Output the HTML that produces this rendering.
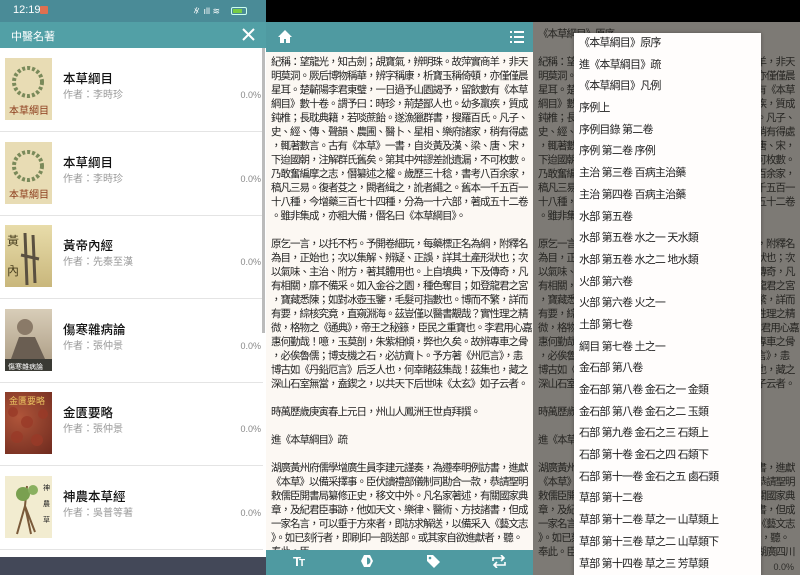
<!DOCTYPE html>
<html><head><meta charset="utf-8">
<style>
*{margin:0;padding:0;box-sizing:border-box}
body{width:800px;height:575px;overflow:hidden;background:#000;position:relative;font-family:"Liberation Sans","Noto Sans CJK TC",sans-serif}
.p{position:absolute;top:0;height:575px;overflow:hidden}
#L{left:0;width:267px;background:#fff}
#M{left:266px;width:267px;background:#fcf8f3}
#R{left:533px;width:267px;background:#fcf8f3}
.sb{position:absolute;left:0;top:0;width:267px;height:22px;background:#4a8b97;color:#fff;font-size:11px}
.hd{position:absolute;left:0;top:22px;width:267px;height:26px;background:#52a0a6;color:#fff;font-size:11px}
.item{position:absolute;left:0;width:263px;height:84px;border-bottom:1px solid #e4e4e4}
.cov{position:absolute;left:5px;top:10px;width:47px;height:62px;overflow:hidden}
.t{position:absolute;left:63px;top:20px;font-size:12.5px;color:#111;font-weight:500}
.a{position:absolute;left:63px;top:38px;font-size:10px;color:#999}
.pc{position:absolute;right:2px;top:42px;font-size:9px;color:#888}
.txt{position:absolute;left:5px;top:55px;font-size:10.5px;letter-spacing:-1px;line-height:14px;color:#222;white-space:pre}
.bar{position:absolute;left:0;width:267px;background:#4f9aa1}
.menu{position:absolute;left:41px;top:33px;width:187px;height:545px;background:#fffdfc;box-shadow:0 0 4px rgba(0,0,0,.3)}
.menu div{height:21.7px;line-height:21.7px;font-size:11px;letter-spacing:-0.8px;color:#222;padding-left:5px;white-space:nowrap}
</style></head><body>
<div class="p" id="L">
 <div class="sb"><span style="position:absolute;left:13px;top:4px">12:19</span><span style="position:absolute;left:40px;top:6px;width:8px;height:8px;background:#e07050;border-radius:1px"></span>
 <span style="position:absolute;left:192px;top:4px;font-size:9px">∦ ıll ≋</span><span style="position:absolute;left:231px;top:7px;width:16px;height:8px;border:1px solid #cfe;border-radius:2px"><span style="display:block;width:9px;height:4px;margin:1px;background:#7c4"></span></span></div>
 <div class="hd"><span style="position:absolute;left:11px;top:6px">中醫名著</span>
 <svg style="position:absolute;left:241px;top:5px" width="15" height="15"><path d="M2 2L13 13M13 2L2 13" stroke="#fff" stroke-width="2"/></svg></div>
 <div class="item" style="top:48px"><div class="cov" style="background:#e8dcb4"><svg width="47" height="62"><circle cx="23" cy="24" r="14" fill="none" stroke="#7a8a5a" stroke-width="4" stroke-dasharray="3 2"/><text x="4" y="56" font-size="10" fill="#8b3a1a">本草綱目</text></svg></div><div class="t">本草綱目</div><div class="a">作者：李時珍</div><div class="pc">0.0%</div></div>
 <div class="item" style="top:131.6px"><div class="cov" style="background:#e8dcb4"><svg width="47" height="62"><circle cx="23" cy="24" r="14" fill="none" stroke="#7a8a5a" stroke-width="4" stroke-dasharray="3 2"/><text x="4" y="56" font-size="10" fill="#8b3a1a">本草綱目</text></svg></div><div class="t">本草綱目</div><div class="a">作者：李時珍</div><div class="pc">0.0%</div></div>
 <div class="item" style="top:215.2px"><div class="cov" style="background:linear-gradient(#e8dcaa,#c9b77c)"><svg width="47" height="62"><path d="M20 8L22 60M28 10L30 58M16 30L34 34" stroke="#5a5040" stroke-width="3"/><text x="2" y="20" font-size="12" fill="#4a4020">黃</text><text x="2" y="50" font-size="12" fill="#4a4020">內</text></svg></div><div class="t">黃帝內經</div><div class="a">作者：先秦至漢</div><div class="pc">0.0%</div></div>
 <div class="item" style="top:298.8px"><div class="cov" style="background:linear-gradient(#d8cdb8,#a89880)"><svg width="47" height="62"><circle cx="20" cy="18" r="8" fill="#8a7a68"/><path d="M6 50L14 28L30 28L40 50Z" fill="#6a5e52"/><rect x="0" y="50" width="47" height="12" fill="#3a3a34"/><text x="3" y="60" font-size="7" fill="#fff">傷寒雜病論</text></svg></div><div class="t">傷寒雜病論</div><div class="a">作者：張仲景</div><div class="pc">0.0%</div></div>
 <div class="item" style="top:382.4px"><div class="cov" style="background:radial-gradient(circle at 30% 40%,#b0553a,#6e2a1e)"><svg width="47" height="62"><g fill="#9a3a28" opacity=".8"><circle cx="8" cy="20" r="5"/><circle cx="22" cy="30" r="6"/><circle cx="38" cy="22" r="5"/><circle cx="12" cy="45" r="6"/><circle cx="32" cy="48" r="6"/></g><text x="4" y="12" font-size="9" fill="#e8c060">金匱要略</text></svg></div><div class="t">金匱要略</div><div class="a">作者：張仲景</div><div class="pc">0.0%</div></div>
 <div class="item" style="top:466px"><div class="cov" style="background:#f2ecd0"><svg width="47" height="62"><path d="M22 10L20 30L12 58M20 30L30 56M20 30L26 58" stroke="#7a5a3a" stroke-width="2" fill="none"/><circle cx="18" cy="18" r="7" fill="#7aa050"/><circle cx="28" cy="14" r="5" fill="#8ab060"/><text x="38" y="14" font-size="7" fill="#222">神</text><text x="38" y="30" font-size="7" fill="#222">農</text><text x="38" y="46" font-size="7" fill="#222">草</text></svg></div><div class="t">神農本草經</div><div class="a">作者：吳普等著</div><div class="pc">0.0%</div></div>
 <div style="position:absolute;left:262px;top:48px;width:3px;height:285px;background:#bbb"></div>
 <div style="position:absolute;left:0;top:557px;width:267px;height:18px;background:#434858"></div>
</div>

<div class="p" id="M">
 <div style="position:absolute;left:0;top:0;width:267px;height:22px;background:#000"></div>
 <div class="bar" style="top:22px;height:30px">
  <svg style="position:absolute;left:11px;top:7px" width="16" height="15"><path d="M8 1L1 8H3V14H7V10H9V14H13V8H15Z" fill="#fff"/></svg>
  <svg style="position:absolute;left:244px;top:9px" width="14" height="12"><g fill="#fff"><rect x="0" y="0" width="2" height="2"/><rect x="4" y="0" width="10" height="2"/><rect x="0" y="5" width="2" height="2"/><rect x="4" y="5" width="10" height="2"/><rect x="0" y="10" width="2" height="2"/><rect x="4" y="10" width="10" height="2"/></g></svg>
 </div>
 <div class="txt">紀稱：望龍光，知古劍；覘寶氣，辨明珠。故萍實商羊，非天
明莫洞。厥后博物稱華，辨字稱康，析寶玉稱倚頓，亦僅僅晨
星耳。楚蘄陽李君東璧，一日過予山園謁予，留飲數有《本草
綱目》數十卷。謂予曰：時珍，荊楚鄙人也。幼多羸疾，質成
鈍椎；長耽典籍，若啖蔗飴。遂漁獵群書，搜羅百氏。凡子、
史、經、傳、聲韻、農圃、醫卜、星相、樂府諸家，稍有得處
，輒著數言。古有《本草》一書，自炎黃及漢、梁、唐、宋，
下迨國朝，注解群氏舊矣。第其中舛謬差訛遺漏，不可枚數。
乃敢奮編摩之志，僭纂述之權。歲歷三十稔，書考八百余家，
稿凡三易。復者芟之，闕者緝之，訛者繩之。舊本一千五百一
十八種，今增藥三百七十四種，分為一十六部，著成五十二卷
。雖非集成，亦粗大備，僭名曰《本草綱目》。

原乞一言，以托不朽。予開卷細玩，每藥標正名為綱，附釋名
為目，正始也；次以集解、辨疑、正誤，詳其土產形狀也；次
以氣味、主治、附方，著其體用也。上自墳典，下及傳奇，凡
有相關，靡不備采。如入金谷之園，種色奪目；如登龍君之宮
，寶藏悉陳；如對冰壺玉鑒，毛髮可指數也。博而不繁，詳而
有要，綜核究竟，直窺淵海。茲豈僅以醫書覯哉？實性理之精
微，格物之《通典》，帝王之秘籙，臣民之重寶也。李君用心嘉
惠何勤哉！噫，玉莫剖，朱紫相傾，弊也久矣。故辨專車之骨
，必俟魯儒；博支機之石，必訪賣卜。予方著《州厄言》，恚
博古如《丹鉛厄言》后乏人也，何幸睹茲集哉！茲集也，藏之
深山石室無當，盍鍥之，以共天下后世味《太玄》如子云者。

時萬歷歲庚寅春上元日，州山人鳳洲王世貞拜撰。

進《本草綱目》疏

湖廣黃州府儒學增廣生員李建元謹奏，為遵奉明例訪書，進獻
《本草》以備采擇事。臣伏讀禮部儀制司勘合一款，恭請聖明
敕儒臣開書局纂修正史，移文中外。凡名家著述，有關國家典
章，及紀君臣事跡，他如天文、樂律、醫術、方技諸書，但成
一家名言，可以垂于方來者，即訪求解送，以備采入《藝文志
》。如已刻行者，即刷印一部送部。或其家自欲進獻者，聽。
奉此。臣</div>
 <div class="bar" style="top:550px;height:25px">
  <span style="position:absolute;left:27px;top:4px;color:#fff;font-weight:bold;font-size:13px;letter-spacing:-2px">T<span style="font-size:10px">T</span></span>
  <svg style="position:absolute;left:94px;top:4px" width="14" height="14"><path d="M4 1H10L13 7L10 13H4L1 7Z" fill="#fff"/><path d="M7 3.5A3.5 3.5 0 0 1 7 10.5Z" fill="#4f9aa1"/></svg>
  <svg style="position:absolute;left:160px;top:4px" width="15" height="15"><path d="M1 1H7L14 8L8 14L1 7Z" fill="#fff"/><circle cx="4" cy="4" r="1.3" fill="#4f9aa1"/></svg>
  <svg style="position:absolute;left:226px;top:5px" width="14" height="13"><path d="M1 6V3H12M9 0L12 3L9 6M13 7V10H2M5 7L2 10L5 13" stroke="#fff" stroke-width="1.6" fill="none"/></svg>
 </div>
</div>

<div class="p" id="R">
 <div style="position:absolute;left:0;top:0;width:267px;height:22px;background:#000;z-index:3"></div>
 <div class="txt" style="top:27px">《本草綱目》原序

紀稱：望龍光，知古劍；覘寶氣，辨明珠。故萍實商羊，非天
明莫洞。厥后博物稱華，辨字稱康，析寶玉稱倚頓，亦僅僅晨
星耳。楚蘄陽李君東璧，一日過予山園謁予，留飲數有《本草
綱目》數十卷。謂予曰：時珍，荊楚鄙人也。幼多羸疾，質成
鈍椎；長耽典籍，若啖蔗飴。遂漁獵群書，搜羅百氏。凡子、
史、經、傳、聲韻、農圃、醫卜、星相、樂府諸家，稍有得處
，輒著數言。古有《本草》一書，自炎黃及漢、梁、唐、宋，
下迨國朝，注解群氏舊矣。第其中舛謬差訛遺漏，不可枚數。
乃敢奮編摩之志，僭纂述之權。歲歷三十稔，書考八百余家，
稿凡三易。復者芟之，闕者緝之，訛者繩之。舊本一千五百一
十八種，今增藥三百七十四種，分為一十六部，著成五十二卷
。雖非集成，亦粗大備，僭名曰《本草綱目》。

原乞一言，以托不朽。予開卷細玩，每藥標正名為綱，附釋名
為目，正始也；次以集解、辨疑、正誤，詳其土產形狀也；次
以氣味、主治、附方，著其體用也。上自墳典，下及傳奇，凡
有相關，靡不備采。如入金谷之園，種色奪目；如登龍君之宮
，寶藏悉陳；如對冰壺玉鑒，毛髮可指數也。博而不繁，詳而
有要，綜核究竟，直窺淵海。茲豈僅以醫書覯哉？實性理之精
微，格物之《通典》，帝王之秘籙，臣民之重寶也。李君用心嘉
惠何勤哉！噫，玉莫剖，朱紫相傾，弊也久矣。故辨專車之骨
，必俟魯儒；博支機之石，必訪賣卜。予方著《州厄言》，恚
博古如《丹鉛厄言》后乏人也，何幸睹茲集哉！茲集也，藏之
深山石室無當，盍鍥之，以共天下后世味《太玄》如子云者。

時萬歷歲庚寅春上元日，州山人鳳洲王世貞拜撰。

進《本草綱目》疏

湖廣黃州府儒學增廣生員李建元謹奏，為遵奉明例訪書，進獻
《本草》以備采擇事。臣伏讀禮部儀制司勘合一款，恭請聖明
敕儒臣開書局纂修正史，移文中外。凡名家著述，有關國家典
章，及紀君臣事跡，他如天文、樂律、醫術、方技諸書，但成
一家名言，可以垂于方來者，即訪求解送，以備采入《藝文志
》。如已刻行者，即刷印一部送部。或其家自欲進獻者，聽。
奉此。臣不揣愚陋，謹以先父所著本草，繕寫進呈，湖廣四川</div>
 <div style="position:absolute;right:6px;top:562px;font-size:9px;color:#333">0.0%</div>
 <div style="position:absolute;left:0;top:0;width:267px;height:575px;background:rgba(40,38,34,.6)"></div>
 <div class="menu">
  <div>《本草綱目》原序</div><div>進《本草綱目》疏</div><div>《本草綱目》凡例</div><div>序例上</div><div>序例目錄 第二卷</div><div>序例 第二卷 序例</div><div>主治 第三卷 百病主治藥</div><div>主治 第四卷 百病主治藥</div><div>水部 第五卷</div><div>水部 第五卷 水之一 天水類</div><div>水部 第五卷 水之二 地水類</div><div>火部 第六卷</div><div>火部 第六卷 火之一</div><div>土部 第七卷</div><div>綱目 第七卷 土之一</div><div>金石部 第八卷</div><div>金石部 第八卷 金石之一 金類</div><div>金石部 第八卷 金石之二 玉類</div><div>石部 第九卷 金石之三 石類上</div><div>石部 第十卷 金石之四 石類下</div><div>石部 第十一卷 金石之五 鹵石類</div><div>草部 第十二卷</div><div>草部 第十二卷 草之一 山草類上</div><div>草部 第十三卷 草之二 山草類下</div><div>草部 第十四卷 草之三 芳草類</div>
 </div>
</div>
</body></html>
